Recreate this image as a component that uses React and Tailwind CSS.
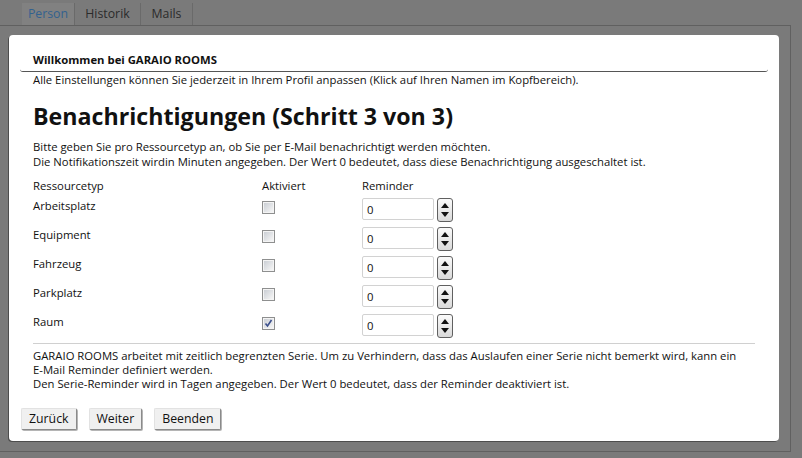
import React from 'react';

const rows = [
  { name: 'Arbeitsplatz', checked: false },
  { name: 'Equipment', checked: false },
  { name: 'Fahrzeug', checked: false },
  { name: 'Parkplatz', checked: false },
  { name: 'Raum', checked: true },
];

const CheckBox = ({ checked }) => (
  <span className="block w-[13px] h-[13px] border border-[#8e8f8f] bg-[#f4f4f4] p-[1px]">
    <span className="relative block w-full h-full bg-gradient-to-br from-[#cbcfd5] to-[#f6f6f6]">
      {checked && (
        <svg viewBox="0 0 9 9" className="absolute inset-0 w-full h-full">
          <path d="M1.5 4.5 L3.5 7 L7.5 1" fill="none" stroke="#3b4f8c" strokeWidth="1.6" />
        </svg>
      )}
    </span>
  </span>
);

const Spinner = () => (
  <div className="flex flex-col items-center justify-between w-[16px] h-[24px] border border-[#606060] rounded-[3px] bg-gradient-to-b from-[#fbfbfb] to-[#d9d9d9] py-[4px]">
    <svg width="8" height="5" viewBox="0 0 8 5"><path d="M4 0 L8 5 L0 5 Z" fill="#111" /></svg>
    <svg width="8" height="5" viewBox="0 0 8 5"><path d="M0 0 L8 0 L4 5 Z" fill="#111" /></svg>
  </div>
);

const Button = ({ children }) => (
  <button className="h-[22px] px-[7px] text-[12.3px] leading-none text-[#111] bg-[#f0f0f0] border border-[#e2e2e2] border-r-[#8a8a8a] border-b-[#8a8a8a] rounded-[2px] shadow-[1px_1px_0_#b5b5b5]">
    {children}
  </button>
);

export default function App() {
  return (
    <div className="w-[802px] h-[458px] bg-[#7a7a7a] overflow-hidden text-[#111]" style={{ fontFamily: '"Segoe UI", "Open Sans", sans-serif' }}>
      {/* tabs */}
      <div className="flex h-[25px] pl-[22px] items-end">
        <div className="h-[22px] w-[52px] bg-[#818181] text-[#33618f] text-[12.3px] flex items-center justify-center pt-[1px]">Person</div>
        <div className="h-[22px] w-[67px] border-l border-r border-[#6a6a6a] text-[#2b2b2b] text-[12.3px] flex items-center justify-center pt-[1px]">Historik</div>
        <div className="h-[22px] w-[52px] border-r border-[#6a6a6a] text-[#2b2b2b] text-[12.3px] flex items-center justify-center pt-[1px]">Mails</div>
      </div>

      {/* panel */}
      <div className="w-[791px] h-[427px] border-t border-r border-b border-[#606060] pt-[9px] pl-[9px]">
        <div className="w-[770px] h-[406px] bg-white rounded-[4px] shadow-[-1px_1px_0_#4d4d4d] pt-[17px] text-[11.3px] leading-[15px]">
          <div className="mx-[11px] border-b border-[#555] rounded-b-[3px] pl-[13px] pb-[4px] font-bold">
            Willkommen bei GARAIO ROOMS
          </div>
          <div className="pl-[24px] pr-[12px]">
            <p>Alle Einstellungen können Sie jederzeit in Ihrem Profil anpassen (Klick auf Ihren Namen im Kopfbereich).</p>

            <h1 className="mt-[14px] text-[23.2px] leading-[30px] font-bold">Benachrichtigungen (Schritt 3 von 3)</h1>

            <p className="mt-[8px]">Bitte geben Sie pro Ressourcetyp an, ob Sie per E-Mail benachrichtigt werden möchten.</p>
            <p>Die Notifikationszeit wirdin Minuten angegeben. Der Wert 0 bedeutet, dass diese Benachrichtigung ausgeschaltet ist.</p>

            <div className="mt-[9px] grid grid-cols-[229px_100px_1fr]">
              <div>Ressourcetyp</div>
              <div>Aktiviert</div>
              <div>Reminder</div>
            </div>
            <div className="flex flex-col gap-[5px] mt-[5px]">
              {rows.map((r) => (
                <div key={r.name} className="grid grid-cols-[229px_100px_1fr] h-[24px]">
                  <div>{r.name}</div>
                  <div className="pt-[3px]"><CheckBox checked={r.checked} /></div>
                  <div className="flex gap-[3px]">
                    <div className="w-[72px] h-[22px] border border-[#d2d2d2] rounded-[2px] pl-[4px] flex items-center">0</div>
                    <Spinner />
                  </div>
                </div>
              ))}
            </div>

            <div className="mt-[5px] border-t border-[#d0d0d0] mr-[12px]" />
            <div className="pt-[5px] leading-[14px]">
              <p>GARAIO ROOMS arbeitet mit zeitlich begrenzten Serie. Um zu Verhindern, dass das Auslaufen einer Serie nicht bemerkt wird, kann ein <span className="whitespace-nowrap">E-Mail</span> Reminder definiert werden.</p>
              <p>Den Serie-Reminder wird in Tagen angegeben. Der Wert 0 bedeutet, dass der Reminder deaktiviert ist.</p>
            </div>
          </div>
          <div className="flex gap-[12px] pl-[12px] mt-[17px]">
            <Button>Zurück</Button>
            <Button>Weiter</Button>
            <Button>Beenden</Button>
          </div>
        </div>
      </div>
    </div>
  );
}
